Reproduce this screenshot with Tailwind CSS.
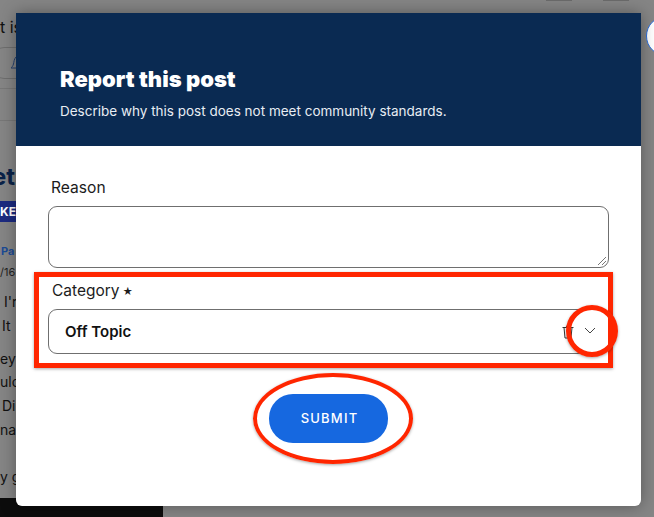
<!DOCTYPE html>
<html lang="en">
<head>
    <meta charset="UTF-8">
    <meta name="viewport" content="width=device-width, initial-scale=1.0">
    <title>Report this post</title>
    <script src="https://cdn.jsdelivr.net/npm/@tailwindcss/browser@4"></script>
</head>
<body class="relative w-[654px] h-[517px] overflow-hidden bg-[#858585] font-['Inter','Liberation_Sans',sans-serif]">
    <!-- Page behind the backdrop -->
    <div class="absolute inset-0 text-[#0d0d0d]">
        <div class="absolute left-[546px] top-0 w-[26px] h-px bg-[#6a6a6a]"></div>
        <div class="absolute left-[603px] top-0 w-[26px] h-px bg-[#6a6a6a]"></div>
        <div class="absolute left-0 top-[17px] text-[16px] leading-5 text-[#111]">t is</div>
        <div class="absolute left-[-10px] top-[47px] w-[40px] h-[32px] rounded-[14px] border border-[#6e6e6e]"></div>
        <svg class="absolute left-[10px] top-[56px]" width="7" height="15" viewBox="0 0 7 15" fill="none" stroke="#24406e" stroke-width="1"><path d="M6 1C4 3 4 6 3.500 8C3 10 2 11 1 12H7"/></svg>
        <div class="absolute left-0 top-[88px] w-[16px] h-px bg-[#777]"></div>
        <div class="absolute left-0 top-[120px] w-[16px] h-px bg-[#777]"></div>
        <div class="absolute left-[-8px] top-[163px] text-[24px] leading-7 font-bold text-[#0a2248]">et</div>
        <div class="absolute left-0 top-[201px] w-[16px] h-[21px] bg-[#1c2a80] text-white text-[12px] leading-[21px] font-bold">KE</div>
        <div class="absolute left-[1px] top-[243px] text-[11px] leading-4 font-bold text-[#1c4a94]">Pa</div>
        <div class="absolute left-0 top-[264px] text-[11px] leading-4 text-[#222]">/16</div>
        <div class="absolute left-[4px] top-[292px] text-[14px] leading-5 text-[#111]">I'r</div>
        <div class="absolute left-[2px] top-[316px] text-[14px] leading-5 text-[#111]">It</div>
        <div class="absolute left-0 top-[349px] text-[14px] leading-5 text-[#111]">ey</div>
        <div class="absolute left-0 top-[372px] text-[14px] leading-5 text-[#111]">ulo</div>
        <div class="absolute left-[2px] top-[396px] text-[14px] leading-5 text-[#111]">Di</div>
        <div class="absolute left-0 top-[420px] text-[14px] leading-5 text-[#111]">na</div>
        <div class="absolute left-0 top-[467px] text-[14px] leading-5 text-[#111]">y g</div>
        <div class="absolute left-0 top-[498px] w-[163px] h-[19px] bg-[#0c0c0c]"></div>
        <div class="absolute left-[646px] top-[16px] w-[40px] h-[40px] rounded-full bg-white border border-[#2b6fe0]"></div>
    </div>

    <!-- Modal -->
    <div class="absolute left-4 top-[13px] w-[625px] h-[493px] bg-white rounded-b-[6px] overflow-hidden shadow-[0_0_16px_rgba(0,0,0,0.35)]">
        <div class="h-[133px] bg-[#0a2a52] pl-[44px] pt-[53px]">
            <h2 class="text-[22px] leading-[26px] font-black text-white">Report this post</h2>
            <p class="mt-[11px] text-[13.5px] leading-4 text-[#e8edf3]">Describe why this post does not meet community standards.</p>
        </div>
        <div class="px-[32px] pt-[33px]">
            <label class="block pl-[3px] text-[15.6px] leading-[18px] text-[#1c1c1c]">Reason</label>
            <div class="mt-[9px] relative h-[62px] rounded-[9px] border border-[#6f6f6f]">
                <svg class="absolute right-[1px] bottom-[1px]" width="10" height="10" viewBox="0 0 10 10" fill="none" stroke="#777" stroke-width="1"><path d="M1 9L9 1M5 9L9 5"/></svg>
            </div>
            <label class="mt-[14px] flex items-center gap-[3px] pl-[4px] text-[15.5px] leading-[18px] text-[#1c1c1c]"><span>Category</span><span class="text-[10px]">★</span></label>
            <div class="mt-[9px] flex items-center h-[45px] pl-4 pr-[12px] rounded-[9px] border border-[#6f6f6f]">
                <span class="flex-1 pt-[2px] text-[15px] font-semibold text-[#111]">Off Topic</span>
                <svg class="mr-[10px]" width="12" height="14" viewBox="0 0 12 14" fill="none" stroke="#333" stroke-width="1"><path d="M0.500 2.500H11.500M2 2.500L3 13H9L10 2.500M4.500 2.500V1H7.500V2.500"/></svg>
                <svg class="-mt-[2px]" width="12" height="7" viewBox="0 0 12 7" fill="none" stroke="#444" stroke-width="1"><path d="M1 1L6 6L11 1"/></svg>
            </div>
            <div class="mt-[40px] flex justify-center">
                <button class="w-[119px] h-[49px] pl-[2px] rounded-[24px] bg-[#1668e0] text-white text-[13px] font-medium tracking-[1.2px]">SUBMIT</button>
            </div>
        </div>
    </div>

    <!-- Red annotations drawn on top of the screenshot -->
    <div class="absolute left-[34px] top-[272px] w-[579px] h-[96px] border-[5px] border-[#ff2600] shadow-[0_1px_3px_rgba(0,0,0,0.35)]"></div>
    <div class="absolute left-[566px] top-[305px] w-[52px] h-[52px] rounded-full border-[5px] border-[#ff2600] shadow-[0_1px_3px_rgba(0,0,0,0.35)]"></div>
    <div class="absolute left-[253px] top-[373px] w-[160px] h-[91px] rounded-[50%] border-[4px] border-[#ff2600] shadow-[0_1px_3px_rgba(0,0,0,0.35)]"></div>
</body>
</html>
